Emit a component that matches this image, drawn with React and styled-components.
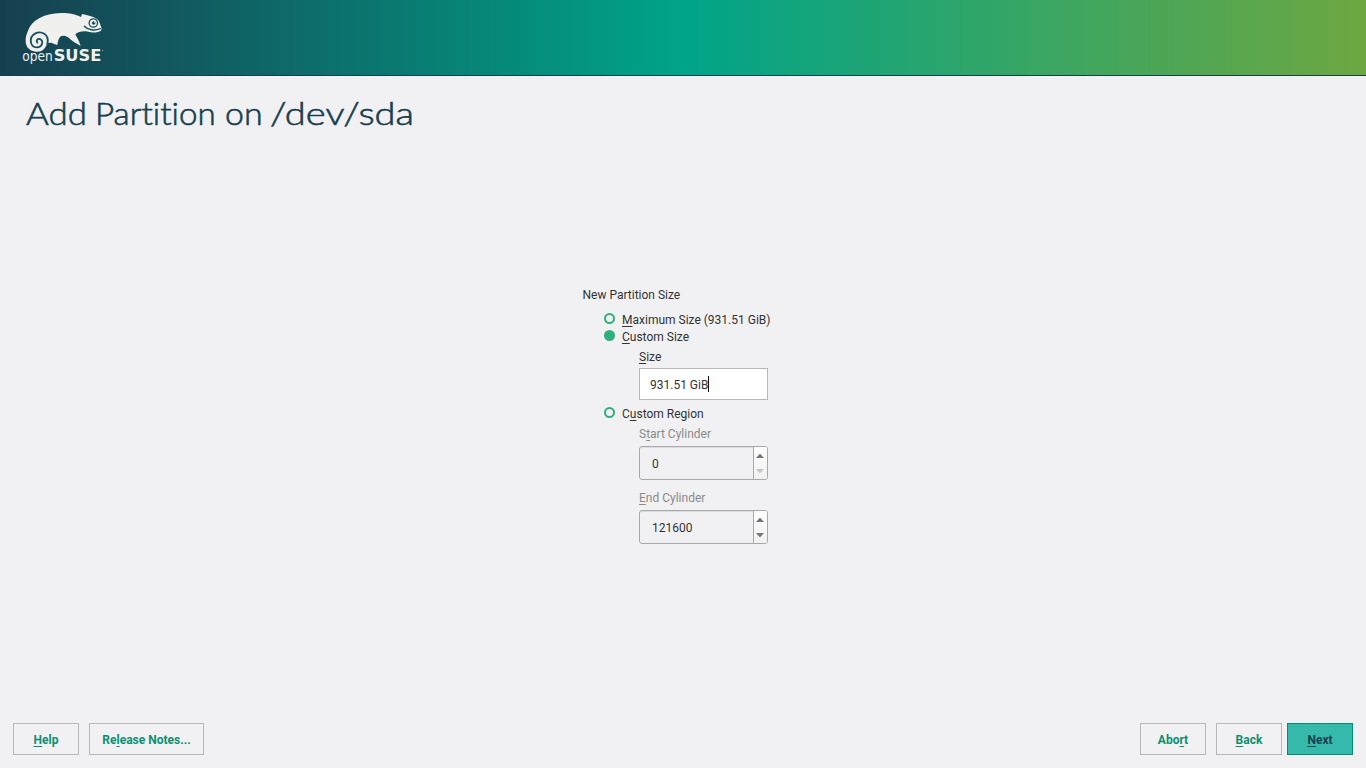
import React from "react";
import styled, { createGlobalStyle, css } from "styled-components";

const Global = createGlobalStyle`
  * { box-sizing: border-box; }
  body { margin: 0; background: #f1f1f3; font: 12px/16px Roboto, "Liberation Sans", sans-serif; color: #333; }
`;

const Page = styled.div`
  width: 100vw;
  height: 100vh;
  display: flex;
  flex-direction: column;
  overflow: hidden;
`;
const Header = styled.header`
  height: 76px;
  flex: none;
  padding-left: 10px;
  background: linear-gradient(90deg, #173f4f 0%, #00a489 50%, #6da741 100%);
  border-bottom: 1px solid #173f4f;
`;
const LogoSvg = styled.svg`
  display: block;
  width: 110px;
  height: 75px;
`;
const Title = styled.h1`
  display: flex;
  margin: 0;
  padding: 15px 26px 0;
  height: 60px;
  font: 300 32px/44px Lato, sans-serif;
  font-variant-ligatures: none;
  -webkit-text-stroke: 0.6px #173f4f;
  color: #173f4f;
`;
const Word = styled.span`
  width: ${(p) => p.$w}px;
  transform: scaleX(${(p) => p.$stretch});
  transform-origin: left;
  white-space: nowrap;
`;
const Main = styled.main`
  flex: 1;
  padding: 151px 0 0 583px;
`;
const Form = styled.div`
  width: 190px;
  display: flex;
  flex-direction: column;
`;
const GroupTitle = styled.div`
  height: 25px;
  margin-left: -0.5px;
`;
const Option = styled.label`
  display: flex;
  height: 17px;
  padding-left: 21px;
  gap: 7px;
  white-space: nowrap;
`;
const Radio = styled.span`
  width: 11px;
  height: 11px;
  margin-top: 1px;
  border-radius: 50%;
  border: 2px solid #2eb07c;
  background: ${(p) => (p.$on ? "#2eb07c" : "transparent")};
`;
const Field = styled.div`
  padding: ${(p) => p.$top || 0}px 0 0 56px;
`;
const Label = styled.div`
  height: ${(p) => p.$h}px;
  color: ${(p) => (p.$off ? "#8a8a8a" : "#333")};
`;
const Input = styled.div`
  display: flex;
  width: 129px;
  height: 32px;
  padding: 8px 0 0 10px;
  border: 1px solid #b8b8ba;
  background: #fff;
`;
const Caret = styled.span`
  width: 1px;
  height: 16px;
  margin-top: -1px;
  background: #111;
`;
const Spin = styled.div`
  display: flex;
  width: 129px;
  height: 34px;
  border: 1px solid #a9a9ab;
  border-radius: 3px;
  box-shadow: inset 0 1px 0 #dcdcde;
`;
const SpinValue = styled.span`
  flex: 1;
  padding: 9px 0 0 12px;
`;
const Arrows = styled.span`
  width: 14px;
  display: flex;
  flex-direction: column;
  align-items: center;
  justify-content: space-between;
  padding: 7px 1px 6px 0;
  border-left: 1px solid #a9a9ab;
  border-radius: 0 2px 2px 0;
  background: linear-gradient(#fdfdfd, #f1f1f2);
`;
const Arrow = styled.span`
  width: 8px;
  height: 4px;
  background: ${(p) => (p.$off ? "#c4c4c4" : "#777")};
  clip-path: ${(p) => (p.$down ? "polygon(0 0, 100% 0, 55% 100%, 45% 100%)" : "polygon(0 100%, 45% 0, 55% 0, 100% 100%)")};
`;
const Footer = styled.footer`
  display: flex;
  flex: none;
  height: 45px;
  padding: 0 13px;
`;
const primary = css`
  color: #173f4f;
  background: #35b9ab;
  border-color: #00906f;
`;
const Button = styled.button`
  width: ${(p) => p.$w || 66}px;
  height: 32px;
  margin: 0 ${(p) => p.$gap || 0}px 0 0;
  padding: 2px 0 0;
  font: 700 12px/16px Roboto, sans-serif;
  color: #0b8f72;
  background: transparent;
  border: 1px solid #b8b8ba;
  ${(p) => p.$primary && primary}
`;
const Spacer = styled.div`
  flex: 1;
`;
const Key = styled.u`
  text-decoration-thickness: 1px;
  text-underline-offset: 2px;
  text-decoration-skip-ink: none;
`;

function Logo() {
  return (
    <LogoSvg viewBox="0 0 330 225">
      <path
        fill="#f0f0ee"
        d="M54 92 C64 62 100 40 154 39 C180 39 196 43 213 51 L216 42 C230 45 246 49 256 54 C267 59 269 68 272 77 C277 87 275 93 266 95 C252 99 240 98 228 94 C216 93 202 96 196 103 C201 113 207 122 212 138 C201 132 189 125 181 118 C172 107 160 104 150 110 C146 116 143 124 142 135 C136 132 130 132 125 128 L112 129 C106 147 96 156 80 155 C46 153 40 122 54 92 Z"
      />
      <path
        fill="none"
        stroke="#185060"
        strokeWidth="5.5"
        strokeLinecap="round"
        d="M112 132 C119 102 93 91 75 101 C56 112 59 141 80 142 C97 142 103 121 89 117 C82 116 77 122 82 128"
      />
      <circle cx="250" cy="69" r="12.5" fill="#f0f0ee" stroke="#185060" strokeWidth="4" />
      <circle cx="251" cy="69" r="5.5" fill="#185060" />
      <circle cx="254" cy="66" r="2" fill="#f0f0ee" />
      <path fill="none" stroke="#185060" strokeWidth="4.5" strokeLinecap="round" d="M223 79 C233 90 254 93 271 86" />
      <g fill="#f0f0ee" fontFamily="DejaVu Sans, sans-serif">
        <text x="37" y="183" fontSize="40" textLength="91" lengthAdjust="spacingAndGlyphs">open</text>
        <text x="131" y="183" fontSize="48" fontWeight="700" textLength="143" lengthAdjust="spacingAndGlyphs">SUSE</text>
        <circle cx="278" cy="151" r="2" opacity=".6" />
      </g>
    </LogoSvg>
  );
}

function SpinBox({ value, atMin }) {
  return (
    <Spin>
      <SpinValue>{value}</SpinValue>
      <Arrows>
        <Arrow />
        <Arrow $down $off={atMin} />
      </Arrows>
    </Spin>
  );
}

export default function App() {
  return (
    <Page>
      <Global />
      <Header><Logo /></Header>
      <Title>
        <Word $w={69} $stretch={1.09}>Add</Word>
        <Word $w={130} $stretch={1.037}>Partition</Word>
        <Word $w={45} $stretch={1.06}>on</Word>
        <Word $w={150} $stretch={1.19}>/dev/sda</Word>
      </Title>
      <Main>
        <Form>
          <GroupTitle>New Partition Size</GroupTitle>
          <Option><Radio /><span><Key>M</Key>aximum Size (931.51 GiB)</span></Option>
          <Option><Radio $on /><span><Key>C</Key>ustom Size</span></Option>
          <Field $top={3}>
            <Label $h={19}><Key>S</Key>ize</Label>
            <Input>931.51 GiB<Caret /></Input>
          </Field>
          <Field $top={6} />
          <Option><Radio /><span>C<Key>u</Key>stom Region</span></Option>
          <Field $top={3}>
            <Label $h={20} $off>S<Key>t</Key>art Cylinder</Label>
            <SpinBox value="0" atMin />
          </Field>
          <Field $top={10}>
            <Label $h={20} $off><Key>E</Key>nd Cylinder</Label>
            <SpinBox value="121600" />
          </Field>
        </Form>
      </Main>
      <Footer>
        <Button $gap={10}><Key>H</Key>elp</Button>
        <Button $w={115}>Re<Key>l</Key>ease Notes...</Button>
        <Spacer />
        <Button $gap={10}>Abo<Key>r</Key>t</Button>
        <Button $gap={5}><Key>B</Key>ack</Button>
        <Button $primary><Key>N</Key>ext</Button>
      </Footer>
    </Page>
  );
}
